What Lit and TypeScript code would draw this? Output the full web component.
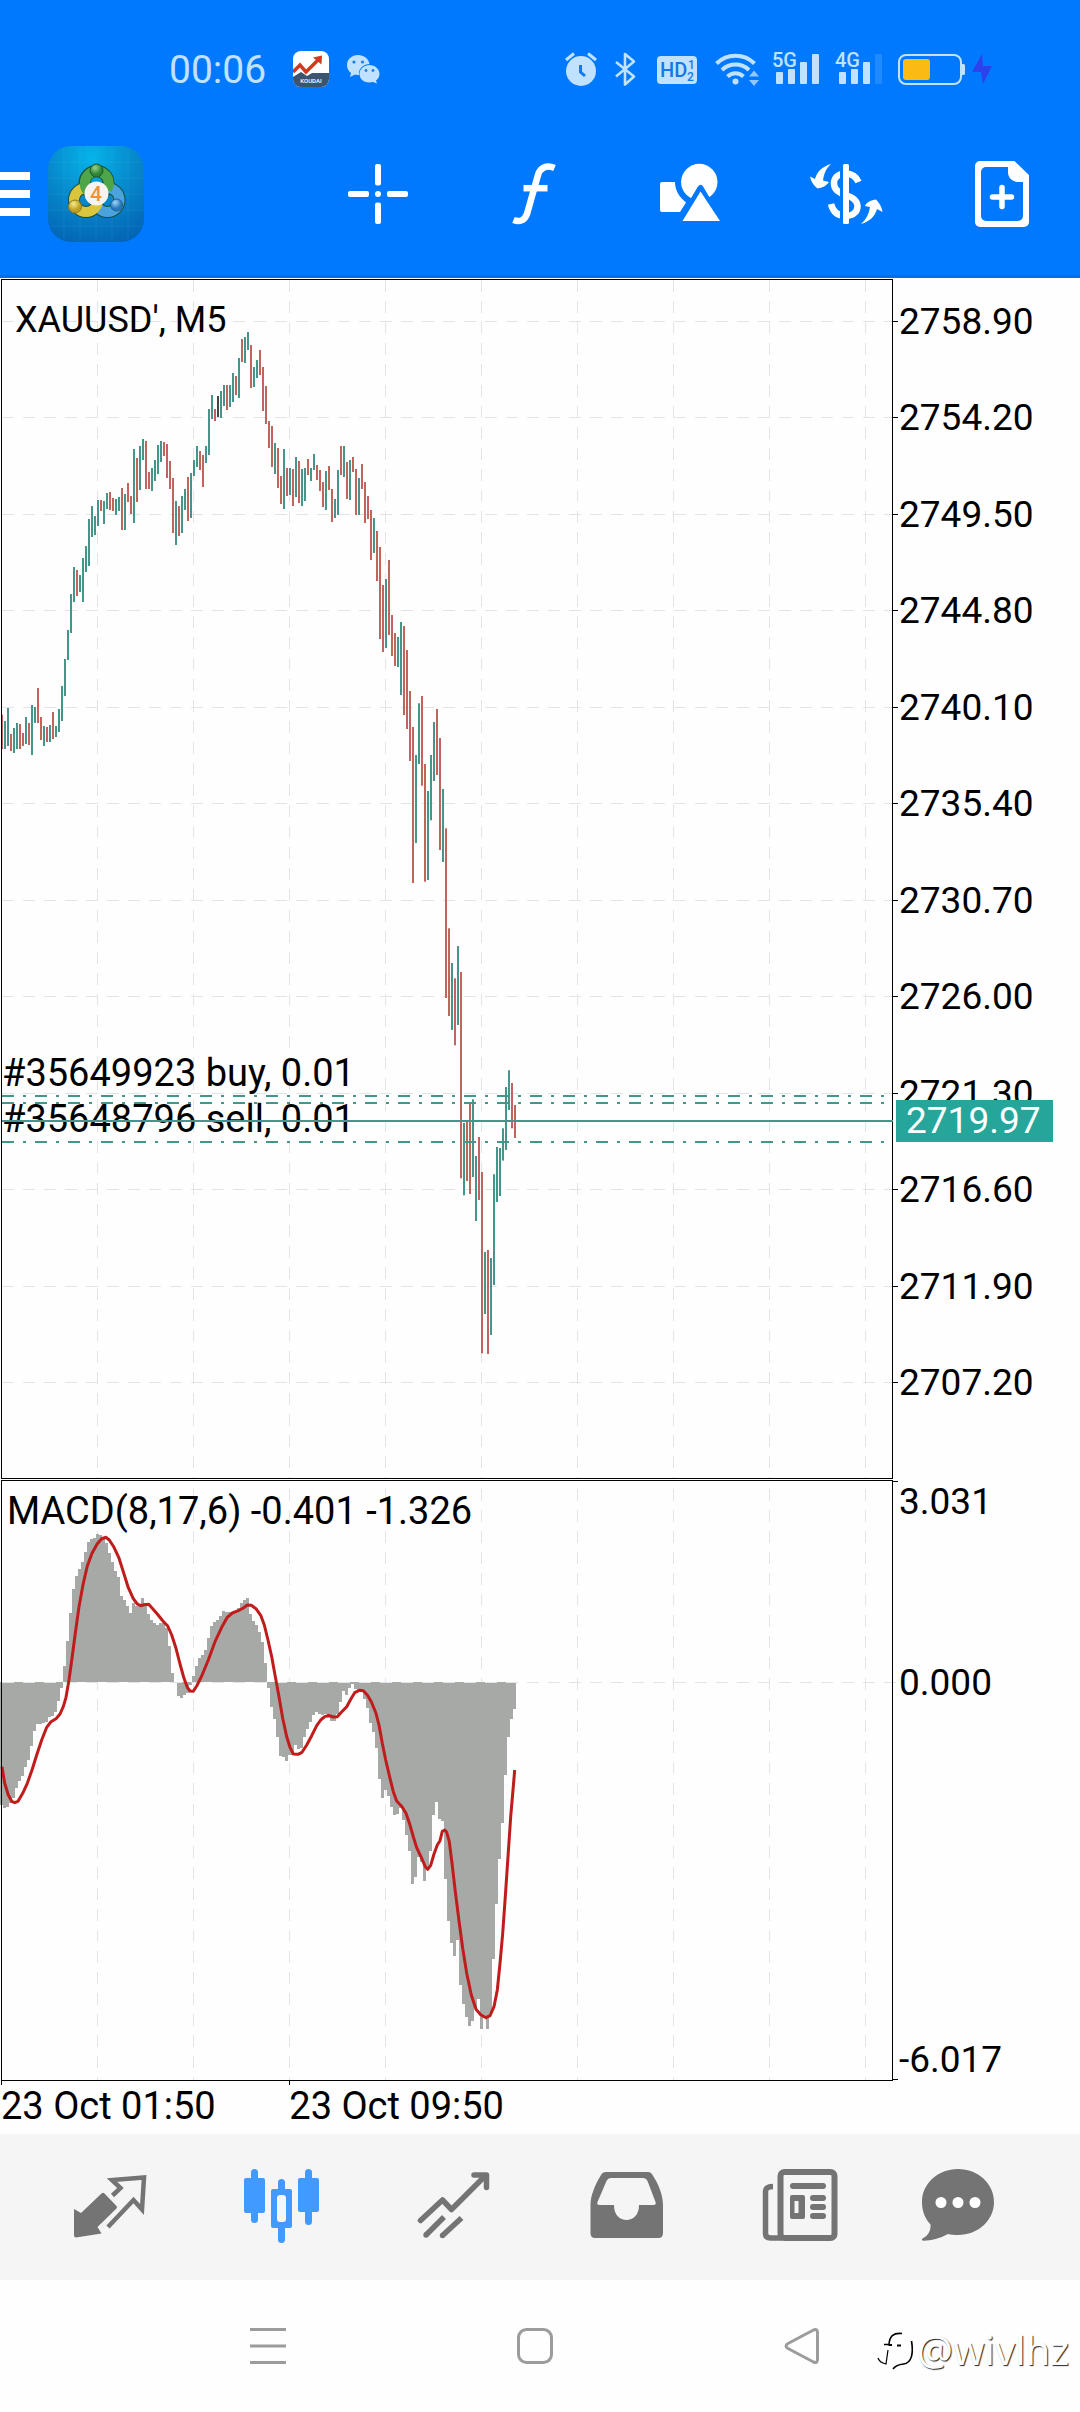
import { LitElement, html, svg, css } from "lit";
import { customElement } from "lit/decorators.js";

/* Bars run left to right, one every three pixels. Vertical values are in thirds of a pixel.
   Each bar is high-low followed by its tone: g rising, r falling, k unchanged. */
const BARS = `1304-1407r 1323-1407g 1284-1398g 1362-1413r 1344-1419g 1329-1407g 1332-1407r 1359-1398r 1311-1392g 1329-1395r
1275-1425g 1281-1329g 1224-1329r 1311-1380r 1338-1398g 1341-1386r 1335-1386g 1296-1377r 1338-1371g 1287-1356g
1218-1323g 1137-1248g 1050-1140g 942-1059g 861-966g 870-948r 885-936g 834-966g 798-876g 717-858g
678-771g 708-765g 660-738g 660-693r 663-732g 639-687g 636-690r 654-693r 657-705g 651-693g
624-750r 642-750g 609-666r 648-702r 507-729g 534-666r 498-630g 477-540g 483-627r 576-627r
564-633g 540-603g 495-582g 483-546g 486-528r 492-594r 543-627r 594-759r 663-795g 678-768r
648-759g 627-690g 591-723r 579-714g 540-588g 498-561g 513-570r 525-621r 498-549g 387-525g
345-417g 387-423r 348-411k 333-414g 315-378g 315-390r 315-381g 279-366g 288-345r 234-354g
177-246r 171-249g 156-210g 195-324r 261-321g 240-294g 210-285r 261-393r 318-432r 423-504r
438-561r 489-582g 504-624r 588-672r 507-687g 564-648r 564-645g 567-678r 531-651g 543-669r
567-678g 564-663g 537-585r 564-603g 522-570g 555-600r 570-633r 606-681r 573-690g 558-630r
627-726r 657-714g 570-705g 498-585r 498-591g 546-657r 540-660g 531-576r 567-705r 594-705g
552-627r 606-729r 648-717r 690-840r 714-819g 753-903r 801-1077r 915-1116r 897-1104g 840-1065r
1005-1128r 1059-1158r 1071-1161g 1026-1245g 1038-1305r 1110-1347r 1233-1443r 1341-1809r 1425-1689g 1270-1452g
1248-1517r 1452-1805r 1533-1800g 1425-1621g 1326-1503g 1287-1485r 1374-1710r 1527-1746g 1645-2154r 1945-2208r
2049-2250g 2095-2296r 1998-2235g 2076-2695r 2529-2746g 2523-2703r 2471-2742r 2458-2691g 2628-2823g 2571-2760r
2676-3220r 2916-3102g 2910-3222r 2934-3165g 2683-3015g 2601-2766g 2604-2748g 2545-2642g 2421-2610g 2371-2490g
2409-2545r 2475-2574r`
  .split(/\s+/)
  .map((t) => {
    const [hi, lo] = t.slice(0, -1).split("-").map(Number);
    return { hi, lo, tone: t.slice(-1) };
  });

const HIST_ZERO = 667;
const HIST = [
  1035, 1043, 1040, 1030, 1015, 985, 963, 947, 920, 900, 857, 812, 793, 793, 790, 787, 771, 768, 757, 722,
  683, 619, 543, 459, 387, 348, 327, 306, 276, 246, 237, 234, 222, 225, 234, 250, 279, 306, 333, 351,
  408, 420, 438, 459, 429, 437, 432, 414, 430, 462, 480, 489, 495, 489, 489, 503, 558, 639, 667, 708,
  714, 705, 700, 675, 648, 618, 594, 585, 570, 534, 498, 486, 480, 468, 453, 456, 456, 456, 453, 444,
  429, 420, 414, 462, 483, 495, 516, 546, 609, 684, 741, 777, 831, 888, 891, 902, 885, 885, 855, 867,
  864, 831, 807, 786, 765, 756, 762, 765, 762, 773, 782, 782, 762, 726, 693, 705, 684, 672, 688, 690,
  695, 717, 744, 789, 816, 864, 957, 1014, 990, 1008, 1041, 1065, 1062, 1045, 1080, 1125, 1173, 1272, 1251, 1190,
  1205, 1263, 1230, 1173, 1065, 1026, 1077, 1083, 1257, 1383, 1449, 1488, 1440, 1575, 1632, 1671, 1698, 1683, 1645, 1617,
  1707, 1675, 1707, 1660, 1497, 1332, 1197, 1089, 945, 831, 777, 747,
];

const SIGNAL = `6,920 14,970 25,1005 35,1024 44,1028 54,1024 68,1000 82,970 96,930 110,885 125,840 140,802 153,785 168,776
180,762 190,740 198,712 207,660 216,595 226,520 237,440 250,370 262,318 276,280 292,251 305,236 318,232 328,240 342,262
356,292 370,335 385,383 400,416 412,432 422,437 432,434 446,433 458,446 472,462 488,482 503,498 515,525 528,565 540,612
552,655 562,682 570,693 580,694 590,678 605,648 625,600 645,545 665,502 682,472 697,459 715,452 730,444 742,435 754,436
768,446 782,466 793,495 804,540 815,590 825,645 837,710 848,775 860,830 870,862 880,882 894,883 906,877 920,855 935,827
950,797 962,780 974,770 986,766 1000,771 1012,770 1024,757 1040,740 1054,715 1064,698 1078,691 1090,692 1102,705 1114,725
1128,760 1137,795 1147,850 1157,900 1170,955 1180,995 1190,1023 1206,1040 1218,1060 1230,1095 1240,1130 1250,1163
1265,1195 1276,1220 1283,1228 1292,1216 1302,1182 1312,1155 1320,1142 1327,1114 1334,1110 1340,1117 1348,1145 1356,1210
1366,1295 1378,1390 1388,1465 1400,1540 1414,1605 1428,1648 1442,1664 1458,1673 1470,1667 1482,1640 1492,1590 1500,1510
1508,1420 1516,1310 1524,1190 1532,1070 1539,990 1544,930`
  .split(/\s+/)
  .map((p) => {
    const [x, y] = p.split(",").map(Number);
    return `${(x / 3).toFixed(1)},${(y / 3 - 20).toFixed(1)}`;
  })
  .join(" ");

const PRICES = ["2758.90", "2754.20", "2749.50", "2744.80", "2740.10", "2735.40", "2730.70", "2726.00", "2721.30", "2716.60", "2711.90", "2707.20"];
const PRICE_ROWS = [43, 139, 236, 332, 429, 525, 622, 718, 815, 911, 1008, 1104];
const TIME_COLS = [97, 193, 289, 385, 481, 577, 673, 769, 865];

const PANEL_H = 1202;
const ORDERS = [
  { text: "#35649923 buy, 0.01", y: 818 },
  { text: "#35648796 sell, 0.01", y: 864 },
];
const ORDER_LEVELS = [818, 825, 864];
const BID = { text: "2719.97", y: 843 };

@customElement("price-panel")
class PricePanel extends LitElement {
  static styles = css`
    :host { display: grid; position: relative; min-width: 0; min-height: 0; }
    .plot { display: block; width: 100%; height: 100%; overflow: visible; }
    .grid { stroke: #e2e5e5; stroke-width: 1; stroke-dasharray: 12 9; }
    .frame { stroke: #000; stroke-width: 1; fill: none; }
    .g { fill: #45958a; }
    .r { fill: #c0645c; }
    .k { fill: #444; }
    .caption { position: absolute; left: 15px; top: 21px; margin: 0; font-size: 36px; font-weight: 400; line-height: 42px; }
    .tag { position: absolute; left: 2px; margin-top: -44px; font-size: 38px; line-height: 42px; white-space: nowrap; }
  `;
  render() {
    return html`
      <svg class="plot" viewBox="0 0 893 1202" preserveAspectRatio="none" role="img" aria-label="Price bars">
        ${TIME_COLS.map((x) => svg`<line class="grid" x1=${x + 0.5} x2=${x + 0.5} y1="2" y2="1200"></line>`)}
        ${PRICE_ROWS.map((y) => svg`<line class="grid" x1="2" x2="892" y1=${y + 0.5} y2=${y + 0.5}></line>
          <line class="frame" x1="892" x2="898" y1=${y + 0.5} y2=${y + 0.5}></line>`)}
        ${BARS.map((b, i) => svg`<rect class=${b.tone} x=${1 + 3 * i} width="2" y=${(2 + b.hi / 3).toFixed(1)} height=${((b.lo - b.hi) / 3).toFixed(1)}></rect>`)}
        <rect class="frame" x="1.5" y="1.5" width="891" height="1199"></rect>
      </svg>
      <h1 class="caption">XAUUSD', M5</h1>
      ${ORDERS.map((o) => html`<span class="tag" style="top:${(o.y / PANEL_H) * 100}%">${o.text}</span>`)}
      <price-levels></price-levels>
    `;
  }
}

@customElement("price-levels")
class PriceLevels extends LitElement {
  static styles = css`
    :host { position: absolute; inset: 0; }
    .plot { display: block; width: 100%; height: 100%; }
    .level { stroke: #45958a; stroke-width: 2; }
    .order { stroke-dasharray: 12 9 3 9; }
  `;
  render() {
    return html`<svg class="plot" viewBox="0 0 893 1202" preserveAspectRatio="none" aria-hidden="true">
      ${ORDER_LEVELS.map((y) => svg`<line class="level order" x1="2" x2="893" y1=${y} y2=${y}></line>`)}
      <line class="level" x1="2" x2="893" y1=${BID.y} y2=${BID.y}></line>
    </svg>`;
  }
}

@customElement("macd-panel")
class MacdPanel extends LitElement {
  static styles = css`
    :host { display: grid; position: relative; min-width: 0; min-height: 0; }
    .plot { display: block; width: 100%; height: 100%; overflow: visible; }
    .grid { stroke: #e2e5e5; stroke-width: 1; stroke-dasharray: 12 9; }
    .frame { stroke: #000; stroke-width: 1; fill: none; }
    .hist { fill: #a7a9a7; }
    .signal { fill: none; stroke: #c01c1c; stroke-width: 3; stroke-linejoin: round; }
    .caption { position: absolute; left: 7px; top: 10px; margin: 0; font-size: 38px; font-weight: 400; line-height: 42px; white-space: nowrap; }
  `;
  render() {
    const zero = Math.round(HIST_ZERO / 3 - 20);
    return html`
      <svg class="plot" viewBox="0 0 893 601" preserveAspectRatio="none" role="img" aria-label="MACD histogram and signal">
        ${TIME_COLS.map((x) => svg`<line class="grid" x1=${x + 0.5} x2=${x + 0.5} y1="9" y2="600"></line>`)}
        <g class="hist" shape-rendering="crispEdges">
          ${HIST.map((v, i) => {
            const y = Math.round(v / 3 - 20);
            return svg`<rect x=${3 * i} width="3" y=${Math.min(y, zero)} height=${Math.abs(y - zero)}></rect>`;
          })}
        </g>
        <line class="grid" x1="2" x2="898" y1="202.5" y2="202.5"></line>
        <polyline class="signal" points=${SIGNAL}></polyline>
        <rect class="frame" x="1.5" y="0.5" width="891" height="600"></rect>
        <path class="frame" d="M892 1.5h6M892 599.5h6M1.5 600v5M289.5 600v5"></path>
      </svg>
      <h2 class="caption">MACD(8,17,6) -0.401 -1.326</h2>
    `;
  }
}

@customElement("status-bar")
class StatusBar extends LitElement {
  static styles = css`
    :host { display: flex; justify-content: space-between; align-items: center; box-sizing: border-box; height: 110px; padding: 30px 84px 0 169px; color: #c0e2ff; }
    .side { display: flex; align-items: center; }
    .clock { min-width: 117px; font-size: 39px; line-height: 40px; }
    svg { display: block; height: 40px; overflow: visible; fill: #c0e2ff; stroke: none; }
    .ln { fill: none; stroke: #c0e2ff; }
    text { font-family: Roboto, sans-serif; font-weight: 500; }
  `;
  render() {
    return html`
      <div class="side">
        <time class="clock">00:06</time>
        <svg width="52" viewBox="286 50 52 40" aria-label="Koudai">
          <defs><clipPath id="k"><rect x="293" y="51" width="36" height="36" rx="8"></rect></clipPath></defs>
          <g clip-path="url(#k)">
            <rect x="293" y="51" width="36" height="36" fill="#fff"></rect>
            <path d="M293 77l8-5 6 4 5-3h17v15h-36z" fill="#3d5470"></path>
            <path d="M293 72l7-7 6 7 13-13" fill="none" stroke="#cf3a22" stroke-width="3.5"></path>
            <path d="M322 55.500l-.5 9-8.500-7z" fill="#cf3a22"></path>
            <text x="311" y="83" text-anchor="middle" font-size="6" fill="#fff">KOUDAI</text>
          </g>
        </svg>
        <svg width="52" viewBox="338 50 52 40" aria-label="WeChat">
          <path d="M358 55c-6.500 0-11 4.500-11 10 0 3.500 1.500 6 4 8l-1 4 5-2.500c1.500.5 3 .5 4 .5-.8-7 5-11 10.500-11-1-5.500-5.500-9-11.500-9z"></path>
          <path d="M369.500 65c-5.500 0-10 4-10 9s4.500 8.500 10 8.500c1.300 0 2.500-.2 3.500-.5l4 1.500-1-3c2-1.500 3.500-4 3.500-6.500 0-5-4.500-9-10-9z"></path>
          <g fill="#1a80f0"><circle cx="354" cy="62" r="1.600"></circle><circle cx="362.500" cy="62" r="1.600"></circle><circle cx="366" cy="70.500" r="1.400"></circle><circle cx="373" cy="70.500" r="1.400"></circle></g>
        </svg>
      </div>
      <div class="side">
        <svg width="48" viewBox="558 50 48 40" aria-label="Alarm">
          <circle cx="581" cy="71" r="15"></circle>
          <path class="ln" d="M566 60l8-6.500M596 60l-8-6.500" stroke-width="3"></path>
          <path d="M580.500 65v7l4.500 4" fill="none" stroke="#0a7cf5" stroke-width="3"></path>
        </svg>
        <svg width="40" viewBox="606 50 40 40" aria-label="Bluetooth">
          <path class="ln" d="M616 62l18 14.500-9 8V54l9 7.500L616 76.500" stroke-width="2.600" stroke-linejoin="round"></path>
        </svg>
        <svg width="60" viewBox="646 50 60 40" aria-label="HD calls">
          <rect x="657" y="56" width="40" height="28" rx="4"></rect>
          <g fill="#1478e6"><text x="660" y="77" font-size="20" font-weight="700">HD</text></g>
          <g fill="#1478e6"><text x="688" y="69" font-size="12">1</text><text x="687" y="81" font-size="12">2</text></g>
        </svg>
        <svg width="60" viewBox="706 50 60 40" aria-label="Wi-Fi">
          <g class="ln" stroke-width="4"><path d="M716.500 63.500a27 27 0 0 1 38 0"></path><path d="M722 70a19.500 19.500 0 0 1 27 0"></path><path d="M727.500 76.500a11.500 11.500 0 0 1 16 0"></path></g>
          <circle cx="735.500" cy="81.500" r="3"></circle>
          <path d="M749 76.500h10l-5-6zM749 80h10l-5 6z" opacity=".75"></path>
        </svg>
        <svg width="60" viewBox="766 50 60 40" aria-label="5G signal">
          <text x="772" y="67" font-size="20">5G</text>
          <rect x="776" y="72" width="7" height="12" rx="1"></rect><rect x="788" y="69" width="7" height="15" rx="1"></rect>
          <rect x="800" y="62" width="7" height="22" rx="1"></rect><rect x="812" y="54" width="7" height="30" rx="1"></rect>
        </svg>
        <svg width="64" viewBox="826 50 64 40" aria-label="4G signal">
          <text x="835" y="67" font-size="20">4G</text>
          <rect x="839" y="72" width="7" height="12" rx="1"></rect><rect x="851" y="69" width="7" height="15" rx="1"></rect>
          <rect x="863" y="62" width="7" height="22" rx="1"></rect><rect x="875" y="54" width="7" height="30" rx="1" opacity=".16"></rect>
        </svg>
        <svg width="78" viewBox="890 50 78 40" aria-label="Battery">
          <rect class="ln" x="899" y="55" width="62" height="29" rx="7" stroke-width="2"></rect>
          <rect x="903" y="59" width="27" height="21" rx="3" fill="#fcbb12"></rect>
          <path d="M962 64h1.500a1.500 1.500 0 0 1 1.500 1.500v8a1.500 1.500 0 0 1-1.500 1.500H962z"></path>
        </svg>
        <svg width="28" viewBox="968 50 28 40" aria-label="Charging">
          <path d="M982 54l-10 18h9l2 12 9-18h-9z" fill="#2d42ec"></path>
        </svg>
      </div>
    `;
  }
}

const TOOLS = [
  { name: "Crosshair", box: "338 154 80 80", art: svg`<g fill="#fff"><rect x="375" y="164" width="6" height="21.500" rx="2"></rect><rect x="375" y="202.500" width="6" height="21.500" rx="2"></rect><rect x="348" y="191" width="21" height="6" rx="2"></rect><rect x="387" y="191" width="21" height="6" rx="2"></rect><circle cx="378" cy="194" r="3"></circle></g>` },
  { name: "Indicators", box: "494 154 80 80", art: svg`<g fill="none" stroke="#fff" stroke-width="6.500"><path d="M513.500 220c6 2.500 11 .5 13.500-6l11-39c2-7 8.500-10.500 16.500-7"></path><path d="M523.500 188.200h24"></path></g>` },
  { name: "Objects", box: "650 154 80 80", art: svg`<path d="M662 182h13c0 8 4 15 11 20.500l-6 9.500h-18a2 2 0 0 1-2-2v-26a2 2 0 0 1 2-2z" fill="#fff"></path><circle cx="699.300" cy="182" r="18.200" fill="#fff"></circle><path d="M700.500 188l-21 35.500h42z" fill="#0079ff" stroke="#0079ff" stroke-width="6" stroke-linejoin="round"></path><path d="M700.500 191.500l-18 29.500h37.500z" fill="#fff"></path>` },
  { name: "Trade", box: "806 154 80 80", art: svg`<path d="M858.500 182c-2.500-6-7-8.500-13-8.500-7.500 0-11.500 4.500-11.500 10 0 6.500 5 9 11.500 11.500 7 2 12 5 12 11.500 0 6-5.500 9.500-12 9.500-7.500 0-12.500-4-14.500-12" fill="none" stroke="#fff" stroke-width="6.500"></path><path d="M840 162h3v64h-3z" fill="#0079ff"></path><rect x="843" y="164" width="6" height="60" rx="1.500" fill="#fff"></rect><path d="M831 164c-9 2.500-14 8-16 15l-5-2.500c1 5 4 9.500 7.500 12 5-.5 9-3 11.500-6.500l-6-1.500c1-7 3-12 8-16.500z" fill="#fff"></path><path d="M861 224c9-2.500 14-8 16-15l5.500 3c-.5-5-3.500-9.500-6.500-12.500-5 .5-9 2.500-11 6.500l5 1c-1 7-4 12.500-9 17z" fill="#fff"></path>` },
  { name: "New order", box: "962 154 80 80", art: svg`<path fill-rule="evenodd" d="M980 161h34.500l14.500 14v47a5 5 0 0 1-5 5h-44a5 5 0 0 1-5-5v-56a5 5 0 0 1 5-5zm6 6a5 5 0 0 0-5 5v44a5 5 0 0 0 5 5h32a5 5 0 0 0 5-5v-34h-6c-5.500-1-9-4.500-9-10v-5z" fill="#fff"></path><path d="M1002 187.500v19M992.500 197h19" stroke="#fff" stroke-width="5.500" stroke-linecap="round"></path>` },
];

@customElement("tool-bar")
class ToolBar extends LitElement {
  static styles = css`
    :host { display: grid; grid-template-columns: 300px repeat(5, minmax(0, 1fr)); align-items: center; box-sizing: border-box; height: 168px; border-bottom: 3px solid #0f6cd6; padding-top: 3px; }
    .lead { display: flex; align-items: center; gap: 18px; }
    button { display: grid; place-items: center; border: 0; padding: 0; background: none; }
    .menu { width: 30px; height: 80px; }
    svg { display: block; }
    text { font-family: Roboto, sans-serif; font-weight: 500; }
  `;
  render() {
    return html`
      <div class="lead">
        <button class="menu" aria-label="Menu"><svg width="30" height="44" viewBox="0 0 30 44" fill="#fff"><path d="M0 0h30v8H0zM0 18h30v8H0zM0 36h30v8H0z"></path></svg></button>
        <svg width="96" height="96" viewBox="48 146 96 96" aria-label="MetaTrader 4">
          <defs>
            <radialGradient id="bg" cx=".45" cy=".12" r=".95"><stop offset="0" stop-color="#05b4ea"></stop><stop offset=".5" stop-color="#0787cb"></stop><stop offset="1" stop-color="#0363b4"></stop></radialGradient>
            <radialGradient id="gr" cx=".4" cy=".3"><stop offset="0" stop-color="#9bd08a"></stop><stop offset="1" stop-color="#2c8434"></stop></radialGradient>
            <radialGradient id="ye" cx=".4" cy=".3"><stop offset="0" stop-color="#f7ea8c"></stop><stop offset="1" stop-color="#bb9f20"></stop></radialGradient>
            <radialGradient id="bl" cx=".4" cy=".3"><stop offset="0" stop-color="#9fd5f5"></stop><stop offset="1" stop-color="#2579bd"></stop></radialGradient>
          </defs>
          <rect x="48" y="146" width="96" height="96" rx="23" fill="url(#bg)"></rect>
          <path d="M64 148v92M80 146v96M96 146v96M112 146v96M128 148v92M50 162h92M48 178h96M48 194h96M48 210h96M50 226h92" stroke="#5cc8f0" stroke-opacity=".12"></path>
          <g fill="none" stroke-width="12" stroke="#17503c"><circle cx="96.500" cy="183" r="12"></circle><circle cx="86" cy="200" r="12"></circle><circle cx="107.500" cy="200" r="12"></circle></g>
          <g fill="none" stroke-width="10"><circle cx="107.500" cy="200" r="12" stroke="#4aa3dd"></circle><circle cx="86" cy="200" r="12" stroke="#d9c63c"></circle><path d="M88 191.500a12 12 0 1 1 19-2" stroke="#4fa648"></path></g>
          <circle cx="96.500" cy="170.500" r="6.500" fill="url(#gr)" stroke="#1f5b2b"></circle>
          <circle cx="75" cy="206.500" r="6.500" fill="url(#ye)" stroke="#8d7a20"></circle>
          <circle cx="116.500" cy="205" r="6" fill="url(#bl)" stroke="#1d5f99"></circle>
          <circle cx="96.500" cy="193.500" r="12" fill="#f6f3f0"></circle>
          <text x="96" y="201" text-anchor="middle" font-size="21" fill="#f0923c">4</text>
        </svg>
      </div>
      ${TOOLS.map((t) => html`<button aria-label=${t.name}><svg width="80" height="80" viewBox=${t.box}>${t.art}</svg></button>`)}
    `;
  }
}

const TABS = [
  { name: "Quotes", x: 24, art: svg`<path d="M74 2209l7 4 20.500-19.500a2 2 0 0 1 3 0L116.500 2206a2 2 0 0 1 0 2.500L97.500 2227l4 6.500-25.500 4a2 2 0 0 1-2-2z" fill="#747474"></path><path d="M112.500 2195.500l8-7.500-8.500-8 32-2.500-2 32-8.500-9.500-25.500 27" fill="none" stroke="#747474" stroke-width="4.500"></path>` },
  { name: "Charts", x: 196, art: svg`<g fill="#419aff"><rect x="244" y="2178" width="21" height="35" rx="2"></rect><rect x="251" y="2169" width="7" height="54" rx="3.500"></rect><rect x="298" y="2178" width="21" height="34" rx="2"></rect><rect x="305" y="2169" width="7" height="56" rx="3.500"></rect><rect x="278" y="2179" width="7" height="64" rx="3.500"></rect><rect x="271" y="2189" width="21" height="39" rx="2"></rect></g><rect x="277" y="2195" width="9" height="27" rx="3" fill="#f5f5f5"></rect>` },
  { name: "Trade", x: 368, art: svg`<g fill="none" stroke="#747474" stroke-width="5.500"><path d="M420.500 2220.500l22-20.500 9 9.500 34-34M474 2175h12.500v12.500" stroke-linecap="round" stroke-linejoin="round"></path><path d="M444 2217l-18 18M461.500 2218l-19 17.500"></path></g><circle cx="426" cy="2235" r="2.700" fill="#747474"></circle><circle cx="442.500" cy="2235.500" r="2.700" fill="#747474"></circle>` },
  { name: "History", x: 540, art: svg`<path fill-rule="evenodd" d="M606 2172h42q3 0 4.500 3c6 9 10.500 20 10.500 30v28q0 5-4.500 5h-63.500q-4.500 0-4.500-5v-28c0-10 5-21 10.500-30q1.500-3 5-3zm5 6q-3 0-4.500 3l-9 21q-1 3 2 3h14.500c-.5 20 25.500 20 25 0h14.500q3 0 2-3l-8-21q-1.500-3-4.500-3z" fill="#747474"></path>` },
  { name: "News", x: 712, art: svg`<g fill="none" stroke="#747474"><rect x="780.500" y="2172" width="54" height="66" rx="4" stroke-width="6"></rect><path d="M773 2186.500c-5 0-7.500 2-7.500 5v42c0 3 1.500 4.500 5 4.500h12" stroke-width="5.500"></path></g><g fill="#747474"><rect x="790" y="2183" width="36" height="6" rx="3"></rect><path fill-rule="evenodd" d="M792 2195h11a2 2 0 0 1 2 2v20a2 2 0 0 1-2 2h-11a2 2 0 0 1-2-2v-20a2 2 0 0 1 2-2zm2.500 6v12h4v-12z"></path><rect x="810" y="2195" width="16" height="6" rx="3"></rect><rect x="810" y="2204" width="16" height="6" rx="3"></rect><rect x="810" y="2213" width="16" height="6" rx="3"></rect></g>` },
  { name: "Messages", x: 884, art: svg`<path d="M958 2169c20 0 36 14.500 36 33s-16 33-36 33c-4 0-7-.3-10-1-8 4.500-17 6.500-24.500 6.700-2 0-2-1.500-1-2.200 6-3 8.500-8 8-14-5.500-6-8.500-13.500-8.500-22.500 0-18.500 16-33 36-33z" fill="#747474"></path><g fill="#fff"><circle cx="941" cy="2202.500" r="5.500"></circle><circle cx="958" cy="2202.500" r="5.500"></circle><circle cx="975" cy="2202.500" r="5.500"></circle></g>` },
];

@customElement("tab-bar")
class TabBar extends LitElement {
  static styles = css`
    :host { display: grid; grid-template-columns: repeat(6, minmax(0, 1fr)); height: 146px; padding: 0 24px; background: #f5f5f5; }
    button { display: grid; place-items: center; border: 0; padding: 0; background: none; }
    svg { display: block; max-width: 100%; }
  `;
  render() {
    return TABS.map((t) => html`<button aria-label=${t.name}><svg width="172" height="146" viewBox="${t.x} 2134 172 146">${t.art}</svg></button>`);
  }
}

@customElement("system-nav")
class SystemNav extends LitElement {
  static styles = css`
    :host { display: grid; position: relative; grid-template-columns: repeat(3, minmax(0, 1fr)); height: 132px; padding: 0 145px 0 134px; background: #fefefe; }
    button { display: grid; place-items: center; border: 0; padding: 0; background: none; }
    svg { display: block; }
    .ic { fill: none; stroke: #9c9c9c; stroke-width: 3; }
    .mark { position: absolute; right: 11px; top: 44px; display: flex; align-items: center; gap: 4px; color: #fff; font: 40px/52px "Noto Sans", sans-serif; text-shadow: 1px 1px 1px #222; }
  `;
  render() {
    return html`
      <button aria-label="Recent apps"><svg class="ic" width="36" height="36"><path d="M0 1.500h36M0 18h36M0 34.500h36"></path></svg></button>
      <button aria-label="Home"><svg class="ic" width="36" height="36"><rect x="1.500" y="1.500" width="33" height="33" rx="8"></rect></svg></button>
      <button aria-label="Back"><svg class="ic" width="36" height="36" stroke-linejoin="round"><path d="M4 15.500L29.500 2q4-1.500 4 2.500v27q0 4-4 2.500L4 20.500q-4-2.500 0-5z"></path></svg></button>
      <div class="mark">
        <svg width="36" height="40" viewBox="877 2337 36 40" fill="none" stroke="#000" stroke-width="1.600" aria-hidden="true">
          <path d="M902 2340.500c-9-1-12.500 3-13 11h-5"></path><path d="M888.500 2352h3.500M897 2352.500h4" stroke-width="2.200"></path>
          <path d="M911.500 2348c2 12 .5 22-8 23-5 .5-8 1.500-10.500 5"></path>
          <path d="M888 2357l-2 14c-4-1-7-2.500-8-6" stroke-width="1.200"></path>
        </svg>
        <span>@wivlhz</span>
      </div>
    `;
  }
}

@customElement("app-root")
class AppRoot extends LitElement {
  static styles = css`
    :host { display: flex; flex-direction: column; min-height: 100vh; background: #fefefe; color: #000; font-family: Roboto, "Liberation Sans", sans-serif; font-size: 37px; }
    .top { background: #0079ff; }
    .chart { flex: 1; display: grid; grid-template-columns: minmax(0, 1fr) 187px; grid-template-rows: minmax(0, 2fr) minmax(0, 1fr) 53px; }
    .prices { position: relative; display: flex; flex-direction: column; justify-content: space-between; padding: 23px 0 76px 6px; line-height: 42px; }
    .bid { position: absolute; left: 3px; margin-top: -21px; padding: 0 12px 0 10px; background: #26a69a; color: #fff; }
    .scale { display: grid; grid-template-rows: 42px 139fr 42px 335fr 42px; padding: 1px 0 0 6px; line-height: 42px; }
    .mid { grid-row: 3; }
    .low { grid-row: 5; }
    .dates { display: grid; grid-template-columns: 288fr 603fr; padding: 4px 0 0 1px; font-size: 38px; line-height: 42px; white-space: nowrap; }
  `;
  render() {
    return html`
      <header class="top"><status-bar></status-bar><tool-bar></tool-bar></header>
      <main class="chart">
        <price-panel></price-panel>
        <div class="prices">
          ${PRICES.map((p) => html`<span>${p}</span>`)}
          <span class="bid" style="top:${(BID.y / PANEL_H) * 100}%">${BID.text}</span>
        </div>
        <macd-panel></macd-panel>
        <div class="scale"><span>3.031</span><span class="mid">0.000</span><span class="low">-6.017</span></div>
        <div class="dates"><span>23 Oct 01:50</span><span>23 Oct 09:50</span></div>
      </main>
      <tab-bar></tab-bar>
      <system-nav></system-nav>
    `;
  }
}
